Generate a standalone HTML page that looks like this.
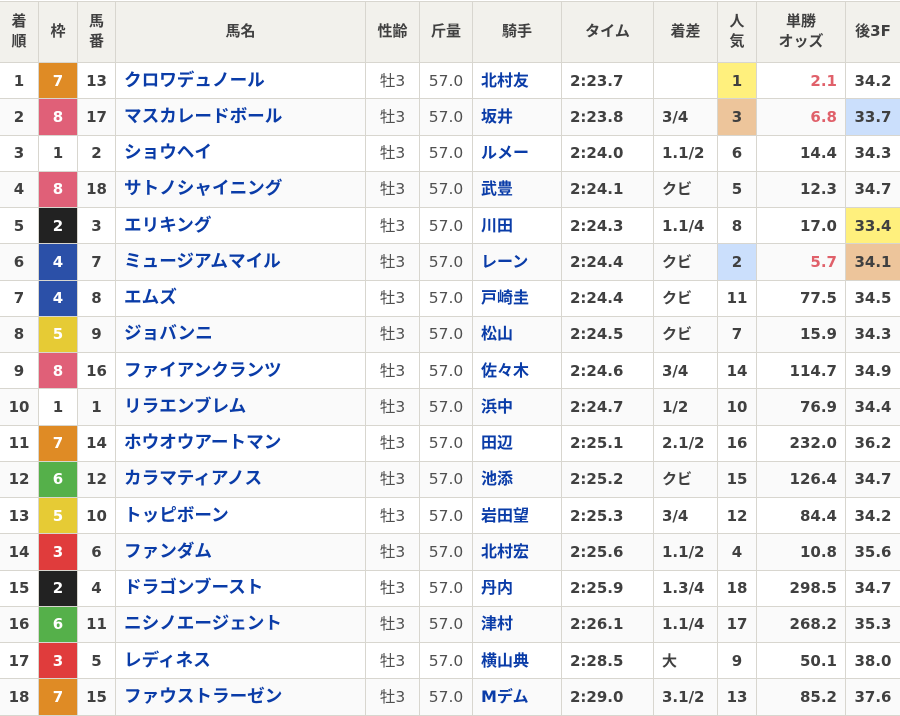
<!DOCTYPE html>
<html lang="ja"><head><meta charset="utf-8"><title>結果</title>
<style>
html,body{margin:0;padding:0;background:#fff;width:900px;height:716px;overflow:hidden}
table{position:absolute;left:0;top:1px;width:900px;table-layout:fixed;border-collapse:separate;border-spacing:0;font-family:"DejaVu Sans","Noto Sans CJK JP",sans-serif;font-size:15px;color:#404040;border-top:1px solid #d8d6cf}
th,td{padding:0;border-right:1px solid #d8d6cf;border-bottom:1px solid #d8d6cf;text-align:center;overflow:hidden;white-space:nowrap;box-sizing:border-box;line-height:18px}
th:last-child,td:last-child{border-right:0}
th{background:#f2f1ec;font-size:15px;font-weight:700;line-height:20px;color:#404040;padding-bottom:2px}
tr{height:36.25px}
tr.h{height:61px}
tr.e td{background:#fafafa}
td{font-weight:700}
td.n{text-align:left;padding-left:8px;font-size:17.6px;color:#0a3ca8;font-weight:700}
td.j{text-align:left;padding-left:8px;font-size:16px;color:#0a3ca8}
td.r{font-weight:400;color:#505050;font-size:15.5px}
td.tm{text-align:left;padding-left:8px}
td.d{text-align:left;padding-left:8px}
td.o{text-align:right;padding-right:8px}
td.red{color:#e0606a}
tr td.w{color:#fff}
tr td.c1{background:#fff}
tr td.k2{background:#222}
tr td.k3{background:#e03c3c}
tr td.k4{background:#2b50a8}
tr td.k5{background:#e6cb35}
tr td.k6{background:#55b04a}
tr td.k7{background:#df8b25}
tr td.k8{background:#e06078}
tr td.y{background:#fff07d}
tr td.b{background:#cbdffc}
tr td.g{background:#edc59b}
</style></head><body>
<table>
<colgroup><col style="width:39px"><col style="width:39px"><col style="width:38px"><col style="width:250px"><col style="width:54px"><col style="width:53px"><col style="width:89px"><col style="width:92px"><col style="width:64px"><col style="width:39px"><col style="width:89px"><col style="width:54px"></colgroup>
<tr class="h"><th>着<br>順</th><th>枠</th><th>馬<br>番</th><th>馬名</th><th>性齢</th><th>斤量</th><th>騎手</th><th>タイム</th><th>着差</th><th>人<br>気</th><th>単勝<br>オッズ</th><th>後3F</th></tr>
<tr><td>1</td><td class="w k7">7</td><td>13</td><td class="n">クロワデュノール</td><td class="r">牡3</td><td class="r">57.0</td><td class="j">北村友</td><td class="tm">2:23.7</td><td class="d"></td><td class="y">1</td><td class="o red">2.1</td><td>34.2</td></tr>
<tr class="e"><td>2</td><td class="w k8">8</td><td>17</td><td class="n">マスカレードボール</td><td class="r">牡3</td><td class="r">57.0</td><td class="j">坂井</td><td class="tm">2:23.8</td><td class="d">3/4</td><td class="g">3</td><td class="o red">6.8</td><td class="b">33.7</td></tr>
<tr><td>3</td><td class="c1">1</td><td>2</td><td class="n">ショウヘイ</td><td class="r">牡3</td><td class="r">57.0</td><td class="j">ルメー</td><td class="tm">2:24.0</td><td class="d">1.1/2</td><td>6</td><td class="o">14.4</td><td>34.3</td></tr>
<tr class="e"><td>4</td><td class="w k8">8</td><td>18</td><td class="n">サトノシャイニング</td><td class="r">牡3</td><td class="r">57.0</td><td class="j">武豊</td><td class="tm">2:24.1</td><td class="d">クビ</td><td>5</td><td class="o">12.3</td><td>34.7</td></tr>
<tr><td>5</td><td class="w k2">2</td><td>3</td><td class="n">エリキング</td><td class="r">牡3</td><td class="r">57.0</td><td class="j">川田</td><td class="tm">2:24.3</td><td class="d">1.1/4</td><td>8</td><td class="o">17.0</td><td class="y">33.4</td></tr>
<tr class="e"><td>6</td><td class="w k4">4</td><td>7</td><td class="n">ミュージアムマイル</td><td class="r">牡3</td><td class="r">57.0</td><td class="j">レーン</td><td class="tm">2:24.4</td><td class="d">クビ</td><td class="b">2</td><td class="o red">5.7</td><td class="g">34.1</td></tr>
<tr><td>7</td><td class="w k4">4</td><td>8</td><td class="n">エムズ</td><td class="r">牡3</td><td class="r">57.0</td><td class="j">戸崎圭</td><td class="tm">2:24.4</td><td class="d">クビ</td><td>11</td><td class="o">77.5</td><td>34.5</td></tr>
<tr class="e"><td>8</td><td class="w k5">5</td><td>9</td><td class="n">ジョバンニ</td><td class="r">牡3</td><td class="r">57.0</td><td class="j">松山</td><td class="tm">2:24.5</td><td class="d">クビ</td><td>7</td><td class="o">15.9</td><td>34.3</td></tr>
<tr><td>9</td><td class="w k8">8</td><td>16</td><td class="n">ファイアンクランツ</td><td class="r">牡3</td><td class="r">57.0</td><td class="j">佐々木</td><td class="tm">2:24.6</td><td class="d">3/4</td><td>14</td><td class="o">114.7</td><td>34.9</td></tr>
<tr class="e"><td>10</td><td class="c1">1</td><td>1</td><td class="n">リラエンブレム</td><td class="r">牡3</td><td class="r">57.0</td><td class="j">浜中</td><td class="tm">2:24.7</td><td class="d">1/2</td><td>10</td><td class="o">76.9</td><td>34.4</td></tr>
<tr><td>11</td><td class="w k7">7</td><td>14</td><td class="n">ホウオウアートマン</td><td class="r">牡3</td><td class="r">57.0</td><td class="j">田辺</td><td class="tm">2:25.1</td><td class="d">2.1/2</td><td>16</td><td class="o">232.0</td><td>36.2</td></tr>
<tr class="e"><td>12</td><td class="w k6">6</td><td>12</td><td class="n">カラマティアノス</td><td class="r">牡3</td><td class="r">57.0</td><td class="j">池添</td><td class="tm">2:25.2</td><td class="d">クビ</td><td>15</td><td class="o">126.4</td><td>34.7</td></tr>
<tr><td>13</td><td class="w k5">5</td><td>10</td><td class="n">トッピボーン</td><td class="r">牡3</td><td class="r">57.0</td><td class="j">岩田望</td><td class="tm">2:25.3</td><td class="d">3/4</td><td>12</td><td class="o">84.4</td><td>34.2</td></tr>
<tr class="e"><td>14</td><td class="w k3">3</td><td>6</td><td class="n">ファンダム</td><td class="r">牡3</td><td class="r">57.0</td><td class="j">北村宏</td><td class="tm">2:25.6</td><td class="d">1.1/2</td><td>4</td><td class="o">10.8</td><td>35.6</td></tr>
<tr><td>15</td><td class="w k2">2</td><td>4</td><td class="n">ドラゴンブースト</td><td class="r">牡3</td><td class="r">57.0</td><td class="j">丹内</td><td class="tm">2:25.9</td><td class="d">1.3/4</td><td>18</td><td class="o">298.5</td><td>34.7</td></tr>
<tr class="e"><td>16</td><td class="w k6">6</td><td>11</td><td class="n">ニシノエージェント</td><td class="r">牡3</td><td class="r">57.0</td><td class="j">津村</td><td class="tm">2:26.1</td><td class="d">1.1/4</td><td>17</td><td class="o">268.2</td><td>35.3</td></tr>
<tr><td>17</td><td class="w k3">3</td><td>5</td><td class="n">レディネス</td><td class="r">牡3</td><td class="r">57.0</td><td class="j">横山典</td><td class="tm">2:28.5</td><td class="d">大</td><td>9</td><td class="o">50.1</td><td>38.0</td></tr>
<tr class="e"><td>18</td><td class="w k7">7</td><td>15</td><td class="n">ファウストラーゼン</td><td class="r">牡3</td><td class="r">57.0</td><td class="j">Mデム</td><td class="tm">2:29.0</td><td class="d">3.1/2</td><td>13</td><td class="o">85.2</td><td>37.6</td></tr>
</table>
</body></html>
